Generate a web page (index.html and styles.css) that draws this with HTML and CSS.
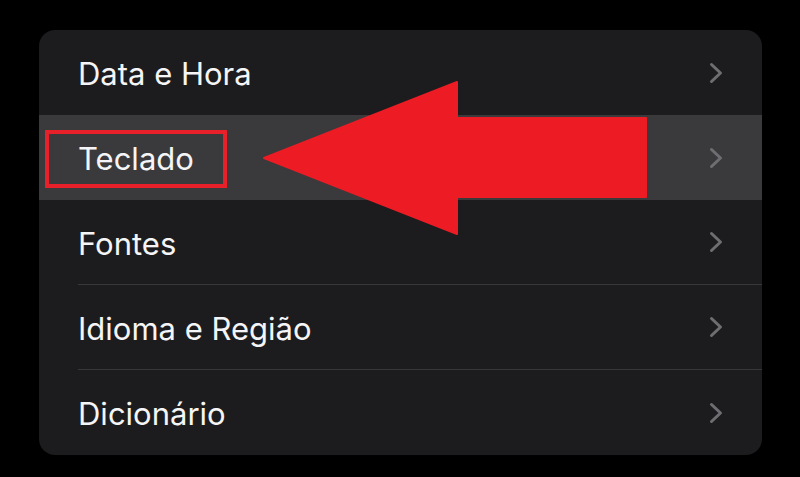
FILE: index.html
```html
<!DOCTYPE html>
<html lang="pt">
<head>
    <meta charset="UTF-8">
    <title>Geral</title>
    <link rel="stylesheet" href="styles.css">
</head>
<body>
    <div class="card">
        <div class="row">
            <div class="row-inner">
                <span class="label">Data e Hora</span>
                <svg class="chevron" viewBox="0 0 14 22"><path d="M2.5 2.5 L11.5 11 L2.5 19.5"/></svg>
            </div>
        </div>
        <div class="row active">
            <div class="row-inner">
                <span class="label">Teclado</span>
                <svg class="chevron" viewBox="0 0 14 22"><path d="M2.5 2.5 L11.5 11 L2.5 19.5"/></svg>
            </div>
        </div>
        <div class="row">
            <div class="row-inner sep">
                <span class="label">Fontes</span>
                <svg class="chevron" viewBox="0 0 14 22"><path d="M2.5 2.5 L11.5 11 L2.5 19.5"/></svg>
            </div>
        </div>
        <div class="row">
            <div class="row-inner sep">
                <span class="label">Idioma e Região</span>
                <svg class="chevron" viewBox="0 0 14 22"><path d="M2.5 2.5 L11.5 11 L2.5 19.5"/></svg>
            </div>
        </div>
        <div class="row">
            <div class="row-inner">
                <span class="label">Dicionário</span>
                <svg class="chevron" viewBox="0 0 14 22"><path d="M2.5 2.5 L11.5 11 L2.5 19.5"/></svg>
            </div>
        </div>
    </div>

    <!-- marcação em vermelho -->
    <div class="mark-box"></div>
    <svg class="mark-arrow" viewBox="0 0 800 477">
        <polygon points="264,158 457,82 457,118 646,118 646,197 457,197 457,234"/>
    </svg>
</body>
</html>
```

FILE: styles.css
```css
body {
    margin: 0;
    padding: 30px 38px 22px 39px;
    background: #000;
    font-family: 'Inter', 'Roboto', sans-serif;
    color: #f5f5f7;
    position: relative;
    height: 477px;
    box-sizing: border-box;
    overflow: hidden;
}
.card {
    background: #1c1c1e;
    border-radius: 16px;
    overflow: hidden;
}
.row {
    height: 85px;
    padding-left: 39px;
}
.row.active {
    background: #3a3a3c;
}
.row-inner {
    height: 100%;
    box-sizing: border-box;
    display: flex;
    align-items: center;
    justify-content: space-between;
    padding-right: 39px;
}
.row-inner.sep {
    border-bottom: 1px solid #38383a;
}
.label {
    font-size: 31px;
    padding-top: 2px;
}
.chevron {
    width: 14px;
    height: 22px;
}
.chevron path {
    fill: none;
    stroke: #6e6e72;
    stroke-width: 3;
    stroke-linecap: round;
    stroke-linejoin: round;
}
.mark-box {
    position: absolute;
    left: 45px;
    top: 130px;
    width: 174px;
    height: 50px;
    border: 4px solid #e8202a;
}
.mark-arrow {
    position: absolute;
    left: 0;
    top: 0;
    width: 800px;
    height: 477px;
}
.mark-arrow polygon {
    fill: #ed1c24;
    stroke: #ed1c24;
    stroke-width: 2;
    stroke-linejoin: round;
}
```
